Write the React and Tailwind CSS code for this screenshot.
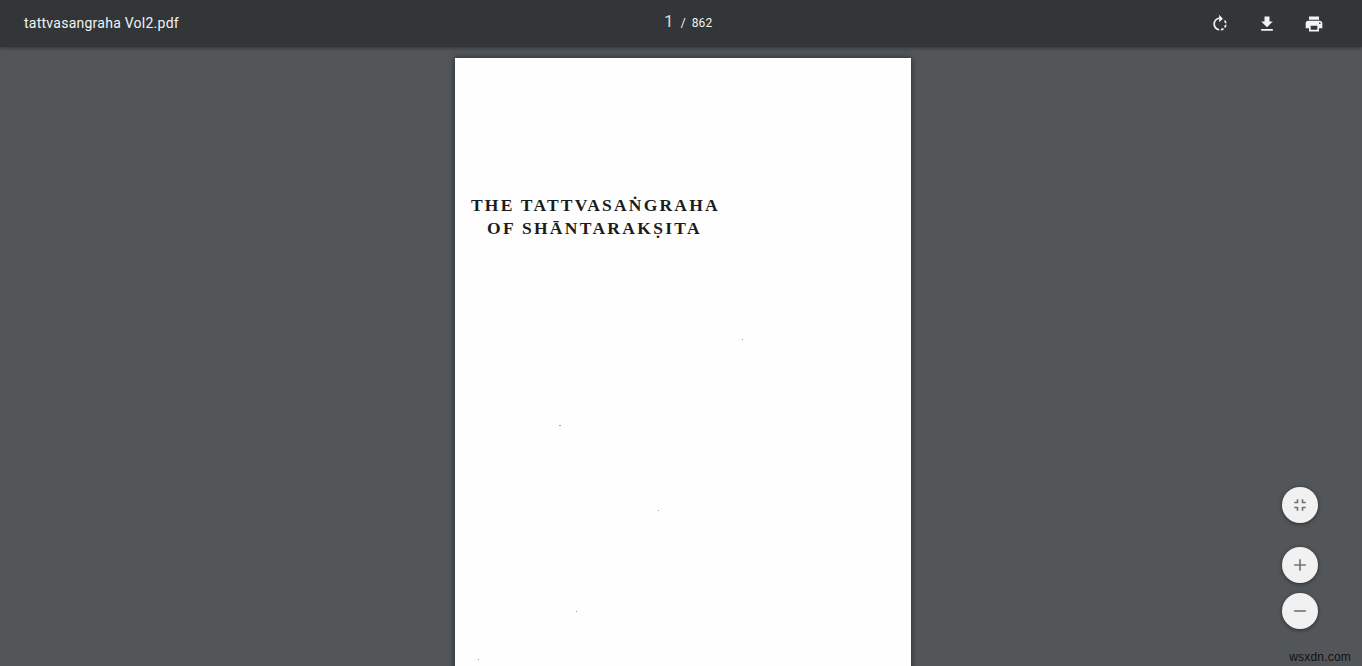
import React from "react";

const ROTATE = "M15.55 5.55L11 1v3.07C7.06 4.56 4 7.92 4 12s3.05 7.44 7 7.93v-2.02c-2.84-.48-5-2.94-5-5.91s2.16-5.43 5-5.91V10l4.55-4.45zM19.93 11c-.17-1.39-.72-2.73-1.62-3.89l-1.42 1.42c.54.75.88 1.6 1.02 2.47h2.02zM13 17.9v2.02c1.39-.17 2.74-.71 3.9-1.61l-1.44-1.44c-.75.54-1.59.89-2.46 1.03zm3.89-2.42l1.42 1.41c.9-1.16 1.45-2.5 1.62-3.89h-2.02c-.14.87-.48 1.72-1.02 2.48z";
const DOWNLOAD = "M19 9h-4V3H9v6H5l7 7 7-7zM5 18v2h14v-2H5z";
const PRINT = "M19 8H5c-1.66 0-3 1.34-3 3v6h4v4h12v-4h4v-6c0-1.66-1.34-3-3-3zm-3 11H8v-5h8v5zm3-7c-.55 0-1-.45-1-1s.45-1 1-1 1 .45 1 1-.45 1-1 1zm-1-9H6v4h12V3z";
const FIT = "M5 16h3v3h2v-5H5v2zm3-8H5v2h5V5H8v3zm6 11h2v-3h3v-2h-5v5zm2-11V5h-2v5h5V8h-3z";
const PLUS = "M19 13h-6v6h-2v-6H5v-2h6V5h2v6h6v2z";
const MINUS = "M19 13H5v-2h14v2z";

function Icon({ d, className }) {
  return (
    <svg viewBox="0 0 24 24" className={className} fill="currentColor">
      <path d={d} />
    </svg>
  );
}

function ToolButton({ d, label }) {
  return (
    <button aria-label={label} className="flex w-[47px] h-10 items-center justify-center text-[#f1f3f4]">
      <Icon d={d} className="w-5 h-5" />
    </button>
  );
}

function Fab({ d, label, className = "" }) {
  return (
    <button
      aria-label={label}
      className={`flex w-9 h-9 items-center justify-center rounded-full bg-[#f1f1f1] text-[#757575] shadow-[0_1px_4px_rgba(0,0,0,0.45)] ${className}`}
    >
      <Icon d={d} className="w-5 h-5" />
    </button>
  );
}

// tiny scan specks on the page, positions relative to the sheet
const specks = [
  { left: 287, top: 281, w: 1 },
  { left: 104, top: 367, w: 2 },
  { left: 203, top: 452, w: 1 },
  { left: 121, top: 553, w: 1 },
  { left: 23, top: 601, w: 1 },
];

export default function App() {
  return (
    <div className="relative flex flex-col h-screen overflow-hidden bg-[#525659] font-['Roboto',sans-serif]">
      <header className="relative z-10 grid grid-cols-[1fr_auto_1fr] items-center h-[47px] shrink-0 pl-6 pr-[25px] bg-[#323639] text-[#f1f3f4] shadow-[0_1px_4px_rgba(0,0,0,0.4)]">
        <div className="text-[14px] font-normal tracking-[0.25px]">tattvasangraha Vol2.pdf</div>
        <div className="flex items-baseline ml-[8px] mb-[3px]">
          <span className="text-[17px] w-[24px] text-center text-[#d8dadb]">1</span>
          <span className="text-[12px] mr-[6px]">/</span>
          <span className="text-[12px] tracking-[0.1px]">862</span>
        </div>
        <div className="flex justify-end">
          <ToolButton d={ROTATE} label="Rotate" />
          <ToolButton d={DOWNLOAD} label="Download" />
          <ToolButton d={PRINT} label="Print" />
        </div>
      </header>

      <main className="flex flex-1 justify-center pt-[11px] pl-1">
        <div className="relative w-[456px] h-[900px] shrink-0 bg-[#fefefe] shadow-[0_0_6px_rgba(0,0,0,0.55)] pt-[136px] font-['Liberation_Serif',serif] font-bold text-[#1c1c1c]">
          <div className="ml-[16px] text-[17.5px] leading-[23px] tracking-[2.2px] whitespace-nowrap">THE TATTVASAṄGRAHA</div>
          <div className="ml-[32px] text-[17.5px] leading-[23px] tracking-[2.3px] whitespace-nowrap">OF SHĀNTARAKṢITA</div>
          {specks.map((s) => (
            <span
              key={s.top}
              className="absolute h-px bg-[#999999]"
              style={{ left: s.left, top: s.top, width: s.w }}
            />
          ))}
        </div>
      </main>

      <div className="absolute right-[44px] bottom-[37px] flex flex-col items-center">
        <Fab d={FIT} label="Fit to page" className="mb-6" />
        <Fab d={PLUS} label="Zoom in" className="mb-[10px]" />
        <Fab d={MINUS} label="Zoom out" />
      </div>

      <div className="absolute right-[11px] bottom-[2px] text-[12px] leading-[14px] tracking-[0.2px] text-[#111111] font-['Liberation_Sans',sans-serif]">wsxdn.com</div>
    </div>
  );
}
